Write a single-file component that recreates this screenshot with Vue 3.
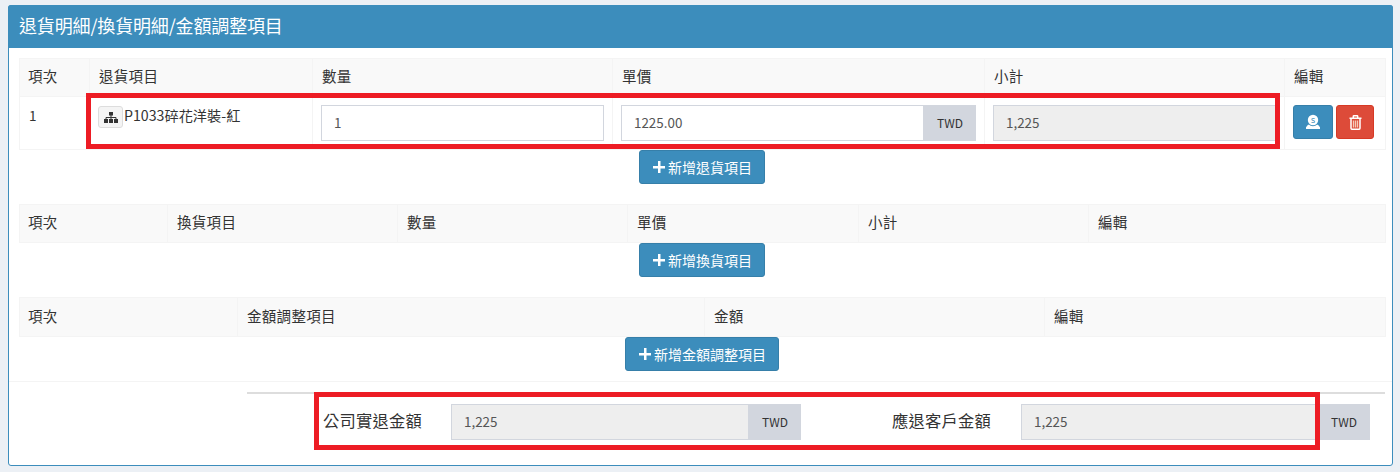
<template>
  <div class="page">
    <section class="panel">
      <header class="panel-head">退貨明細/換貨明細/金額調整項目</header>
      <div class="panel-body">
        <table class="grid">
          <colgroup>
            <col v-for="w in returnCols" :key="w" :style="{ width: w + 'px' }" />
          </colgroup>
          <thead>
            <tr><th v-for="h in returnHeads" :key="h">{{ h }}</th></tr>
          </thead>
          <tbody>
            <tr class="item-row">
              <td>1</td>
              <td>
                <span class="tree-btn">
                  <svg width="14" height="11" viewBox="0 0 14 11">
                    <path fill="#333" d="M5 0h4v3.500H5zM0 7h4v4H0zM5 7h4v4H5zM10 7h4v4h-4z" />
                    <path fill="none" stroke="#333" d="M7 3v4M2 7.500V5.500h10v2" />
                  </svg>
                </span><span class="item-name">P1033碎花洋裝-紅</span>
              </td>
              <td><div class="field"><span class="input">1</span></div></td>
              <td>
                <div class="field"><span class="input">1225.00</span><span class="addon">TWD</span></div>
              </td>
              <td><div class="field"><span class="input readonly">1,225</span></div></td>
              <td class="actions">
                <button class="icon-btn blue">
                  <svg width="16" height="16" viewBox="0 0 16 16">
                    <circle cx="8" cy="6" r="5.200" fill="#fff" />
                    <path fill="#fff" d="M3 10.800L1 13.300V15h14v-1.700l-2-2.500h-1.300c-1 1.900-6.400 1.900-7.400 0z" />
                    <text x="8" y="8.500" text-anchor="middle" class="dollar">S</text>
                  </svg>
                </button>
                <button class="icon-btn red">
                  <svg width="13" height="15" viewBox="0 0 13 15">
                    <path fill="none" stroke="#fff" stroke-width="1.500" d="M2 4v9.300c0 .5.400.9.900.900h7.200c.5 0 .9-.4.900-.9V4M.5 3.300h12M4.300 3V1.400c0-.4.300-.7.700-.7h3c.4 0 .7.300.7.700V3" />
                    <path fill="none" stroke="#f4c9b8" stroke-width="1.300" d="M4.500 5.500v7M6.500 5.500v7M8.500 5.500v7" />
                  </svg>
                </button>
              </td>
            </tr>
          </tbody>
        </table>
        <div class="add-row"><button class="add-btn"><span class="plus"></span>新增退貨項目</button></div>

        <table class="grid">
          <colgroup>
            <col v-for="w in exchangeCols" :key="w" :style="{ width: w + 'px' }" />
          </colgroup>
          <thead>
            <tr><th v-for="h in exchangeHeads" :key="h">{{ h }}</th></tr>
          </thead>
        </table>
        <div class="add-row"><button class="add-btn"><span class="plus"></span>新增換貨項目</button></div>

        <table class="grid tall">
          <colgroup>
            <col v-for="w in adjustCols" :key="w" :style="{ width: w + 'px' }" />
          </colgroup>
          <thead>
            <tr><th v-for="h in adjustHeads" :key="h">{{ h }}</th></tr>
          </thead>
        </table>
        <div class="add-row"><button class="add-btn"><span class="plus"></span>新增金額調整項目</button></div>
      </div>

      <footer class="panel-foot">
        <div class="totals">
          <div class="total first">
            <label>公司實退金額</label>
            <div class="field"><span class="input readonly">1,225</span><span class="addon">TWD</span></div>
          </div>
          <div class="total">
            <label>應退客戶金額</label>
            <div class="field"><span class="input readonly">1,225</span><span class="addon">TWD</span></div>
          </div>
        </div>
      </footer>
    </section>

    <div class="mark mark-row"></div>
    <div class="mark mark-total"></div>
  </div>
</template>

<script setup>
const returnCols = [70, 223, 300, 372, 300, 101]
const returnHeads = ['項次', '退貨項目', '數量', '單價', '小計', '編輯']
const exchangeCols = [148, 230, 230, 231, 230, 297]
const exchangeHeads = ['項次', '換貨項目', '數量', '單價', '小計', '編輯']
const adjustCols = [218, 467, 340, 341]
const adjustHeads = ['項次', '金額調整項目', '金額', '編輯']
</script>

<style>
html, body { margin: 0; background: #ecf0f5; }
</style>

<style scoped>
.page {
  position: relative;
  width: 1400px;
  height: 472px;
  overflow: hidden;
  padding: 5px 7px 0 8px;
  box-sizing: border-box;
  background: #ecf0f5;
  font-family: "Noto Sans CJK TC", "Noto Sans", sans-serif;
  font-size: 14.500px;
  color: #333;
}
.panel {
  height: 461px;
  box-sizing: border-box;
  background: #fff;
  border: 1px solid #3c8dbc;
  border-radius: 3px;
  display: flex;
  flex-direction: column;
}
.panel-head {
  margin: -1px -1px 0;
  height: 43px;
  line-height: 41px;
  padding-left: 11px;
  background: #3c8dbc;
  color: #fff;
  font-size: 18px;
  letter-spacing: -0.150px;
  border-radius: 3px 3px 0 0;
}
.panel-body {
  padding: 10px 7px 10px 10px;
  border-bottom: 1px solid #f4f4f4;
  height: 313px;
}
.grid {
  width: 1366px;
  table-layout: fixed;
  border-collapse: collapse;
  border: 1px solid #f4f4f4;
}
.grid th {
  height: 38px;
  padding: 0 0 4px 9px;
  box-sizing: border-box;
  text-align: left;
  font-weight: 400;
  letter-spacing: 0.300px;
  background: #f9f9f9;
  border: 1px solid #f4f4f4;
}
.grid th:first-child { padding-left: 8px; }
.grid.tall th { height: 39px; }
.grid td {
  padding: 8px;
  vertical-align: top;
  border: 1px solid #f4f4f4;
  line-height: 20px;
}
.item-row { height: 53px; }
.item-row td:first-child { padding-left: 9px; font-size: 13.500px; }
.item-row td:nth-child(2) { padding: 9px 0 0 8px; }
.tree-btn {
  display: inline-flex;
  width: 25px;
  height: 22px;
  box-sizing: border-box;
  align-items: center;
  justify-content: center;
  background: #f4f4f4;
  border: 1px solid #ddd;
  border-radius: 3px;
  vertical-align: top;
}
.item-name { vertical-align: top; line-height: 18px; margin-left: 1px; font-size: 14.200px; }
.field { display: flex; height: 36px; }
.input {
  flex: 1;
  min-width: 0;
  box-sizing: border-box;
  height: 36px;
  line-height: 33px;
  padding-left: 12px;
  border: 1px solid #d2d6de;
  color: #555;
  background: #fff;
  font-size: 13.400px;
}
.input.readonly { background: #eee; }
.addon {
  width: 52px;
  height: 36px;
  line-height: 36px;
  flex: none;
  text-align: center;
  background: #d2d6de;
  font-size: 12px;
}
.actions { white-space: nowrap; padding-left: 8px !important; }
.icon-btn {
  width: 40px;
  height: 34px;
  padding: 0;
  border-radius: 3px;
  display: inline-flex;
  align-items: center;
  justify-content: center;
  vertical-align: top;
  border: 1px solid;
}
.icon-btn.blue { background: #3c8dbc; border-color: #367fa9; }
.icon-btn.red { width: 38px; margin-left: 3px; background: #dd4b39; border-color: #d73925; }
.dollar { font-size: 7.500px; font-weight: 400; fill: #2a7fb0; font-family: "Noto Sans", sans-serif; }
.add-row { display: flex; justify-content: center; margin-bottom: 20px; }
.add-btn {
  height: 34px;
  padding: 0 12px 0 13px;
  box-sizing: border-box;
  display: inline-flex;
  align-items: center;
  background: #3c8dbc;
  border: 1px solid #367fa9;
  border-radius: 3px;
  color: #fff;
  font-family: inherit;
  font-size: 14px;
  line-height: 30px;
}
.plus {
  width: 12px;
  height: 12px;
  margin-right: 3px;
  background:
    linear-gradient(#fff, #fff) center / 12px 2.500px no-repeat,
    linear-gradient(#fff, #fff) center / 2.500px 12px no-repeat;
}
.panel-foot { padding: 10px 7px 0 238px; }
.totals {
  border-top: 2px solid #ddd;
  padding-top: 10px;
  display: flex;
}
.total { display: flex; align-items: center; flex: none; }
.total.first { padding-left: 76px; width: 645px; box-sizing: border-box; }
.total label { font-size: 16.300px; letter-spacing: 0.200px; width: 129px; flex: none; padding-bottom: 4px; }
.total .field { width: 349px; flex: none; }
.total.first .field { width: 350px; margin-left: -1px; }
.mark {
  position: absolute;
  border: 5px solid #ed1c24;
  box-sizing: border-box;
  pointer-events: none;
}
.mark-row { left: 86px; top: 93px; width: 1194px; height: 56px; }
.mark-total { left: 314px; top: 392px; width: 1006px; height: 58px; }
</style>
